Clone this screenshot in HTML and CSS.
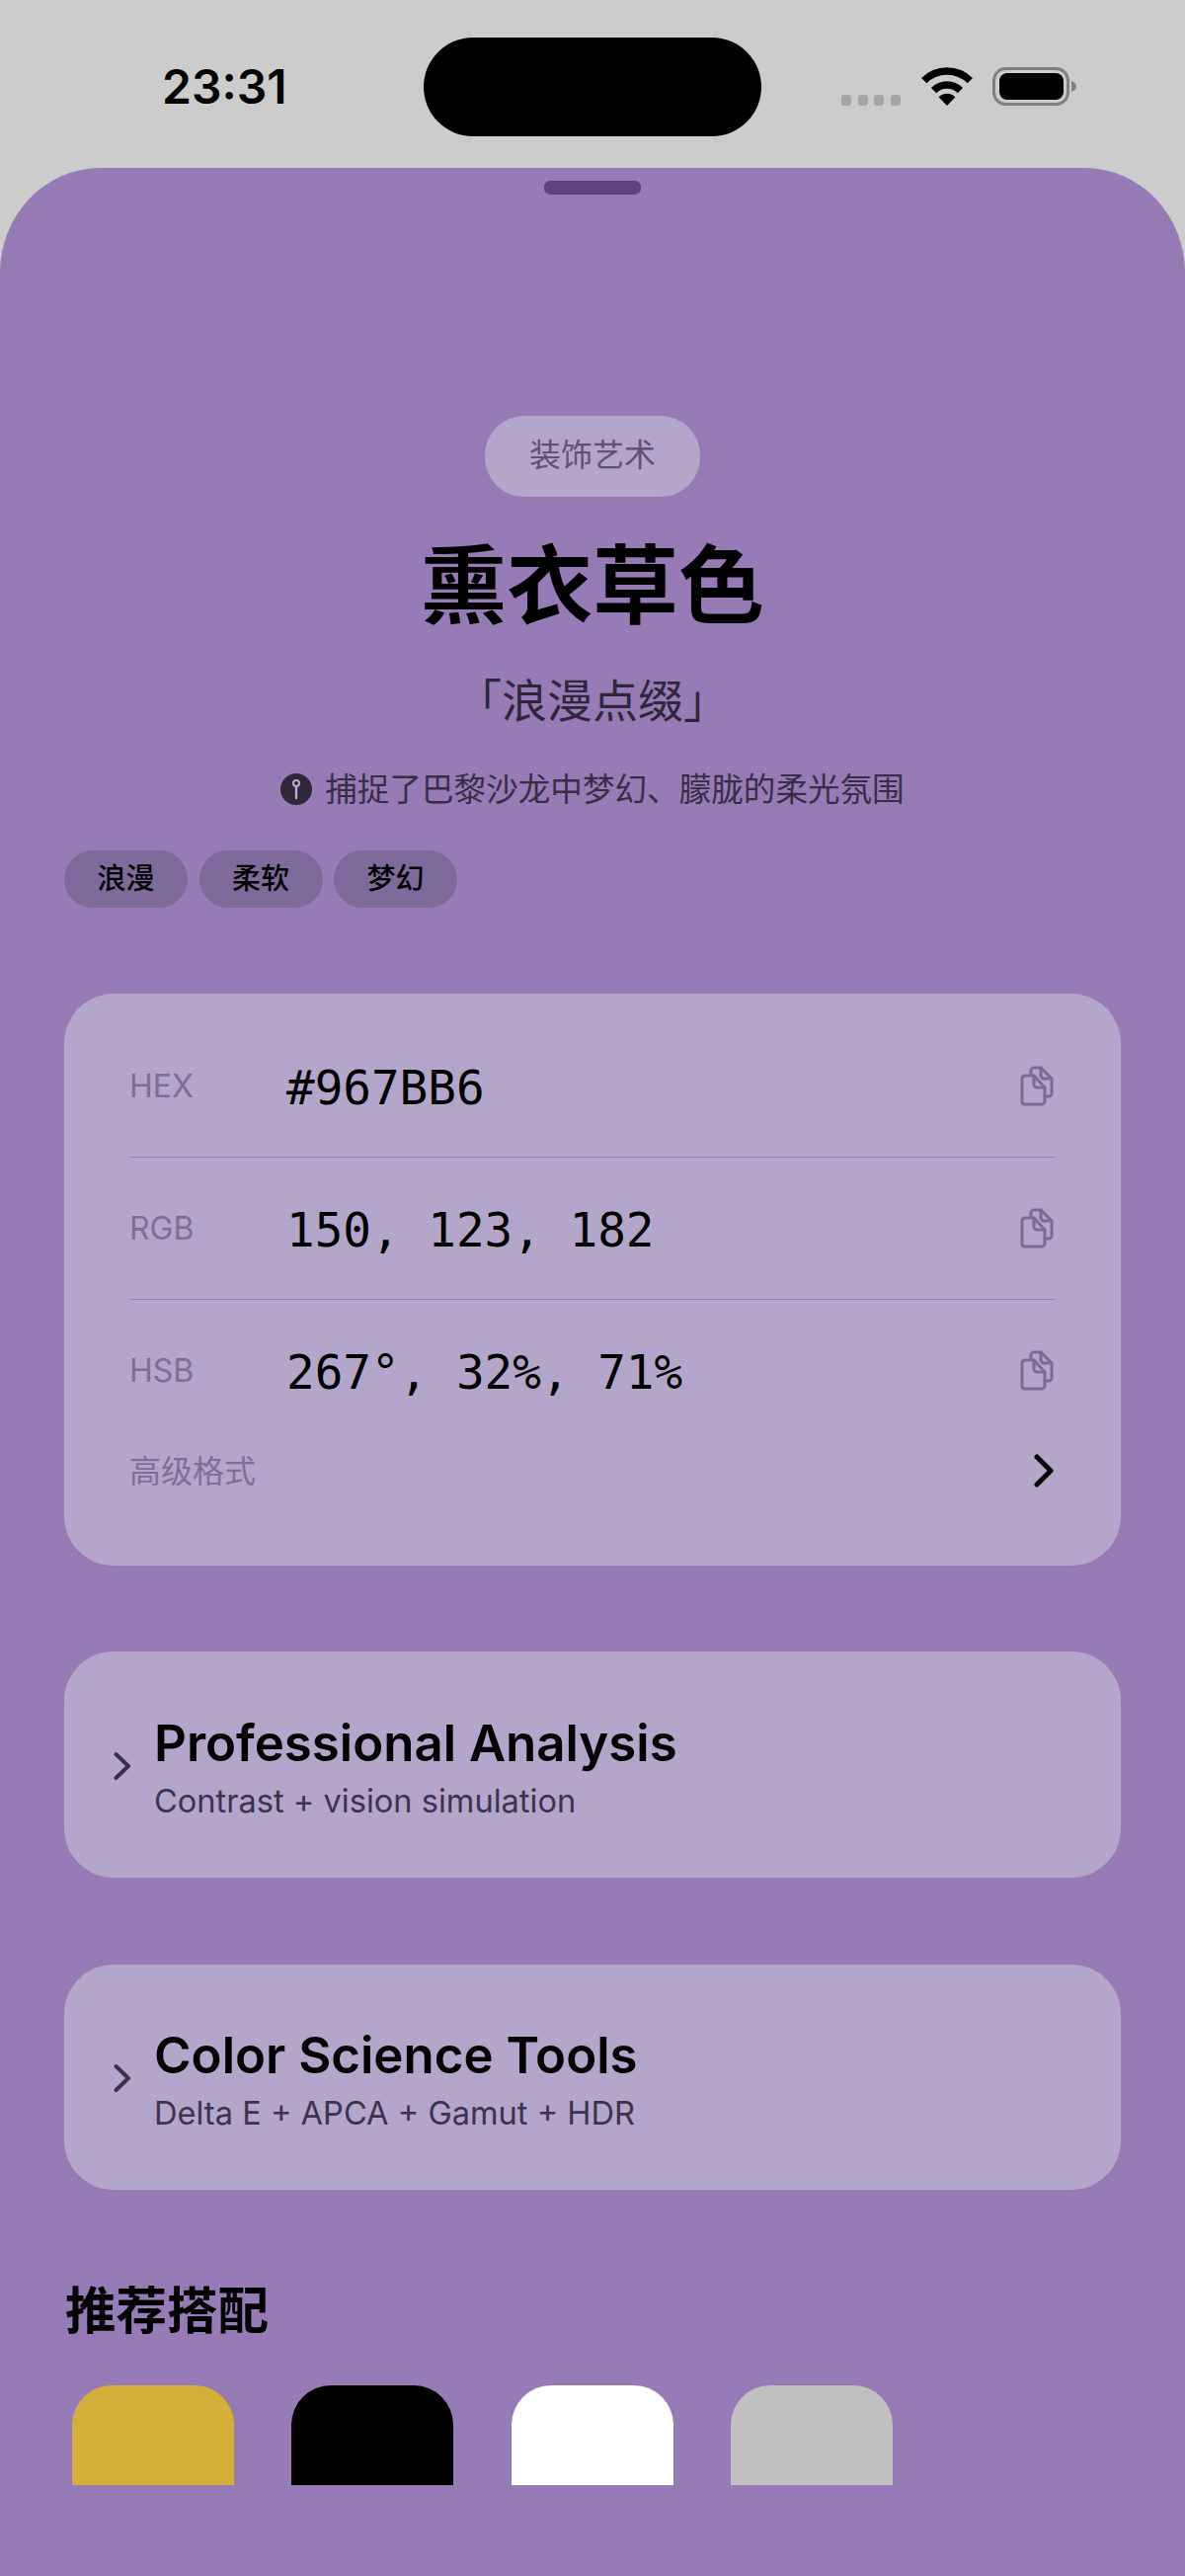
FILE: index.html
```html
<!DOCTYPE html>
<html lang="zh-CN">
<head>
<meta charset="UTF-8" />
<meta name="viewport" content="width=device-width, initial-scale=1" />
<title>熏衣草色</title>
<link rel="stylesheet" href="styles.css">
</head>
<body>
<header class="status-bar">
  <span class="time">23:31</span>
  <div class="island"></div>
  <div class="status-icons">
    <div class="signal"><i></i><i></i><i></i><i></i></div>
    <svg class="wifi" viewBox="0 0 52 39" aria-hidden="true">
      <path d="M2.7 13.7A33 33 0 0 1 49.3 13.7" fill="none" stroke="#000" stroke-width="7.5"/>
      <path d="M12.6 23.6A19 19 0 0 1 39.4 23.6" fill="none" stroke="#000" stroke-width="7.5"/>
      <path d="M26 39L17.5 30.2A12 12 0 0 1 34.5 30.2Z" fill="#000"/>
    </svg>
    <svg class="battery" viewBox="0 0 85 39" aria-hidden="true">
      <rect x="1.5" y="1.5" width="75" height="36" rx="12" fill="none" stroke="#808080" stroke-width="3"/>
      <rect x="7" y="6" width="65" height="27" rx="8" fill="#000"/>
      <path d="M80 14C83 15 85 17 85 19.5C85 22 83 24 80 25Z" fill="#808080"/>
    </svg>
  </div>
</header>

<main class="sheet">
  <div class="handle"></div>

  <section class="hero">
    <span class="badge">装饰艺术</span>
    <h1 class="title">熏衣草色</h1>
    <p class="subtitle">「浪漫点缀」</p>
    <p class="hint">
      <svg class="hint-icon" viewBox="0 0 32 32" aria-hidden="true">
        <circle cx="16" cy="16" r="16" fill="#2e2739"/>
        <circle cx="16" cy="10" r="3" fill="none" stroke="#b9acd0" stroke-width="2"/>
        <path d="M16 13V25" stroke="#b9acd0" stroke-width="2.4" stroke-linecap="round"/>
      </svg>
      捕捉了巴黎沙龙中梦幻、朦胧的柔光氛围
    </p>
  </section>

  <div class="chips">
    <span class="chip">浪漫</span>
    <span class="chip">柔软</span>
    <span class="chip">梦幻</span>
  </div>

  <section class="card formats">
    <div class="row">
      <span class="row-label">HEX</span>
      <span class="row-value">#967BB6</span>
      <svg class="copy" viewBox="0 0 34 41" aria-hidden="true"><use href="#copy-icon"/></svg>
    </div>
    <div class="row">
      <span class="row-label">RGB</span>
      <span class="row-value">150, 123, 182</span>
      <svg class="copy" viewBox="0 0 34 41" aria-hidden="true"><use href="#copy-icon"/></svg>
    </div>
    <div class="row last">
      <span class="row-label">HSB</span>
      <span class="row-value">267°, 32%, 71%</span>
      <svg class="copy" viewBox="0 0 34 41" aria-hidden="true"><use href="#copy-icon"/></svg>
    </div>
    <div class="advanced">
      <span class="advanced-label">高级格式</span>
      <svg class="advanced-arrow" viewBox="0 0 20 34" aria-hidden="true">
        <path d="M3 3L17 17L3 31" fill="none" stroke="#000" stroke-width="5" stroke-linecap="round" stroke-linejoin="round"/>
      </svg>
    </div>
  </section>

  <section class="card fold">
    <svg class="fold-arrow" viewBox="0 0 18 30" aria-hidden="true">
      <path d="M2.5 3L15 15L2.5 27" fill="none" stroke="#3a3148" stroke-width="4" stroke-linecap="round" stroke-linejoin="round"/>
    </svg>
    <div>
      <h2 class="fold-title">Professional Analysis</h2>
      <p class="fold-sub">Contrast + vision simulation</p>
    </div>
  </section>

  <section class="card fold second">
    <svg class="fold-arrow" viewBox="0 0 18 30" aria-hidden="true">
      <path d="M2.5 3L15 15L2.5 27" fill="none" stroke="#3a3148" stroke-width="4" stroke-linecap="round" stroke-linejoin="round"/>
    </svg>
    <div>
      <h2 class="fold-title">Color Science Tools</h2>
      <p class="fold-sub">Delta E + APCA + Gamut + HDR</p>
    </div>
  </section>

  <h3 class="section-title">推荐搭配</h3>
  <div class="swatches">
    <div class="swatch gold"></div>
    <div class="swatch black"></div>
    <div class="swatch white"></div>
    <div class="swatch silver"></div>
    <div class="swatch self"></div>
  </div>
</main>

<svg class="defs" aria-hidden="true">
  <symbol id="copy-icon" viewBox="0 0 34 41">
    <g fill="none" stroke="#7b6b93" stroke-width="3" stroke-linejoin="round" stroke-linecap="round">
      <path d="M5 10H14L25 22V36A3 3 0 0 1 22 39H5A3 3 0 0 1 2 36V13A3 3 0 0 1 5 10Z"/>
      <path d="M14 10V19A3 3 0 0 0 17 22H25"/>
      <path d="M11 9V5A3 3 0 0 1 14 2H21L32 13V28A3 3 0 0 1 29 31H25"/>
      <path d="M21 2V10A3 3 0 0 0 24 13H32"/>
    </g>
  </symbol>
</svg>
</body>
</html>
```

FILE: styles.css
```css
* {
  box-sizing: border-box;
}
html, body {
  margin: 0;
  padding: 0;
  height: 2608px;
  overflow: hidden;
}
body {
  background: #cccccc;
  color: #000;
  font-family: Inter, "Noto Sans CJK SC", sans-serif;
}
.defs {
  display: none;
}

/* status bar */
.status-bar {
  height: 170px;
  display: grid;
  grid-template-columns: 429px 342px 429px;
}
.time {
  padding: 60px 0 0 164px;
  font-size: 48px;
  font-weight: 600;
  line-height: 56px;
}
.island {
  margin-top: 38px;
  height: 100px;
  border-radius: 50px;
  background: #000;
}
.status-icons {
  display: flex;
  align-items: flex-start;
  padding: 68px 0 0 81px;
}
.signal {
  display: flex;
  gap: 6.5px;
  margin-top: 28px;
}
.signal i {
  width: 10px;
  height: 11px;
  border-radius: 3px;
  background: #a6a6a6;
}
.wifi {
  width: 52px;
  height: 39px;
  margin-left: 21px;
}
.battery {
  width: 85px;
  height: 39px;
  margin-left: 20px;
}

/* sheet */
.sheet {
  height: 2438px;
  background: #967bb6;
  border-radius: 102px 102px 0 0 / 106px 106px 0 0;
  display: flex;
  flex-direction: column;
}
.handle {
  width: 98px;
  height: 14px;
  margin: 13px auto 0;
  border-radius: 6px;
  background: #5f437f;
}
.hero {
  display: flex;
  flex-direction: column;
  align-items: center;
  margin-top: 224px;
}
.badge {
  height: 82px;
  width: 218px;
  border-radius: 40px;
  background: #b4a6ca;
  color: #5f5272;
  font-size: 32px;
  line-height: 80px;
  text-align: center;
}
.title {
  margin: 36px 0 0;
  font-size: 87px;
  font-weight: 700;
  line-height: 110px;
}
.subtitle {
  margin: 32px 0 0;
  font-size: 46px;
  line-height: 56px;
  color: #2e2739;
}
.hint {
  display: flex;
  align-items: center;
  gap: 13px;
  margin: 40px 0 0;
  font-size: 32.6px;
  line-height: 44px;
  color: #372e45;
}
.hint-icon {
  width: 32px;
  height: 32px;
}
.chips {
  display: flex;
  gap: 11.5px;
  margin: 40px 0 0 65px;
}
.chip {
  width: 125px;
  height: 58px;
  border-radius: 29px;
  background: #7f6a9c;
  font-size: 29px;
  font-weight: 500;
  line-height: 57px;
  text-align: center;
}

/* cards */
.card {
  width: 1070px;
  margin-left: 65px;
  border-radius: 50px;
  background: #b4a6ca;
}
.formats {
  margin-top: 87px;
  padding: 22px 66px 66px;
}
.row {
  height: 144px;
  display: flex;
  align-items: center;
  border-bottom: 1px solid #9a80b8;
}
.row.last {
  height: 143px;
  border-bottom: none;
}
.row-label {
  width: 159px;
  font-size: 32px;
  color: #7f6f97;
}
.row-value {
  flex: 1;
  padding-top: 3px;
  font-family: "DejaVu Sans Mono", monospace;
  font-size: 47.6px;
  color: #000;
}
.copy {
  width: 34px;
  height: 41px;
  margin-right: 2px;
}
.advanced {
  height: 60px;
  display: flex;
  align-items: center;
  justify-content: space-between;
}
.advanced-label {
  padding-bottom: 5px;
  font-size: 32px;
  color: #7f6f97;
}
.advanced-arrow {
  width: 20px;
  height: 34px;
  margin-right: 2px;
}
.fold {
  height: 229px;
  margin-top: 87px;
  padding: 3px 0 0 50px;
  display: flex;
  align-items: center;
  gap: 23px;
}
.fold.second {
  height: 228px;
  margin-top: 88px;
  padding-top: 2px;
}
.fold-arrow {
  width: 18px;
  height: 30px;
}
.fold-title {
  margin: 0;
  font-size: 51px;
  font-weight: 600;
  line-height: 64px;
}
.fold-sub {
  margin: 6px 0 0;
  font-size: 32.6px;
  line-height: 40px;
  color: #3d3350;
}

/* recommended */
.section-title {
  margin: 88px 0 0 66px;
  font-size: 51.5px;
  font-weight: 700;
  line-height: 68px;
}
.swatches {
  display: flex;
  gap: 58.3px;
  height: 130px;
  margin-top: 42px;
  padding: 0 0 0 73px;
  overflow: hidden;
  clip-path: inset(-30px -30px 29px -30px);
}
.swatch {
  flex: none;
  width: 164px;
  height: 164px;
  border-radius: 40px;
}
.gold { background: #d4af37; }
.black { background: #000; }
.white { background: #fff; }
.silver { background: #c0c0c0; }
.self {
  background: #967bb6;
  box-shadow: 0 0 10px rgba(90, 60, 130, 0.04);
}
```
